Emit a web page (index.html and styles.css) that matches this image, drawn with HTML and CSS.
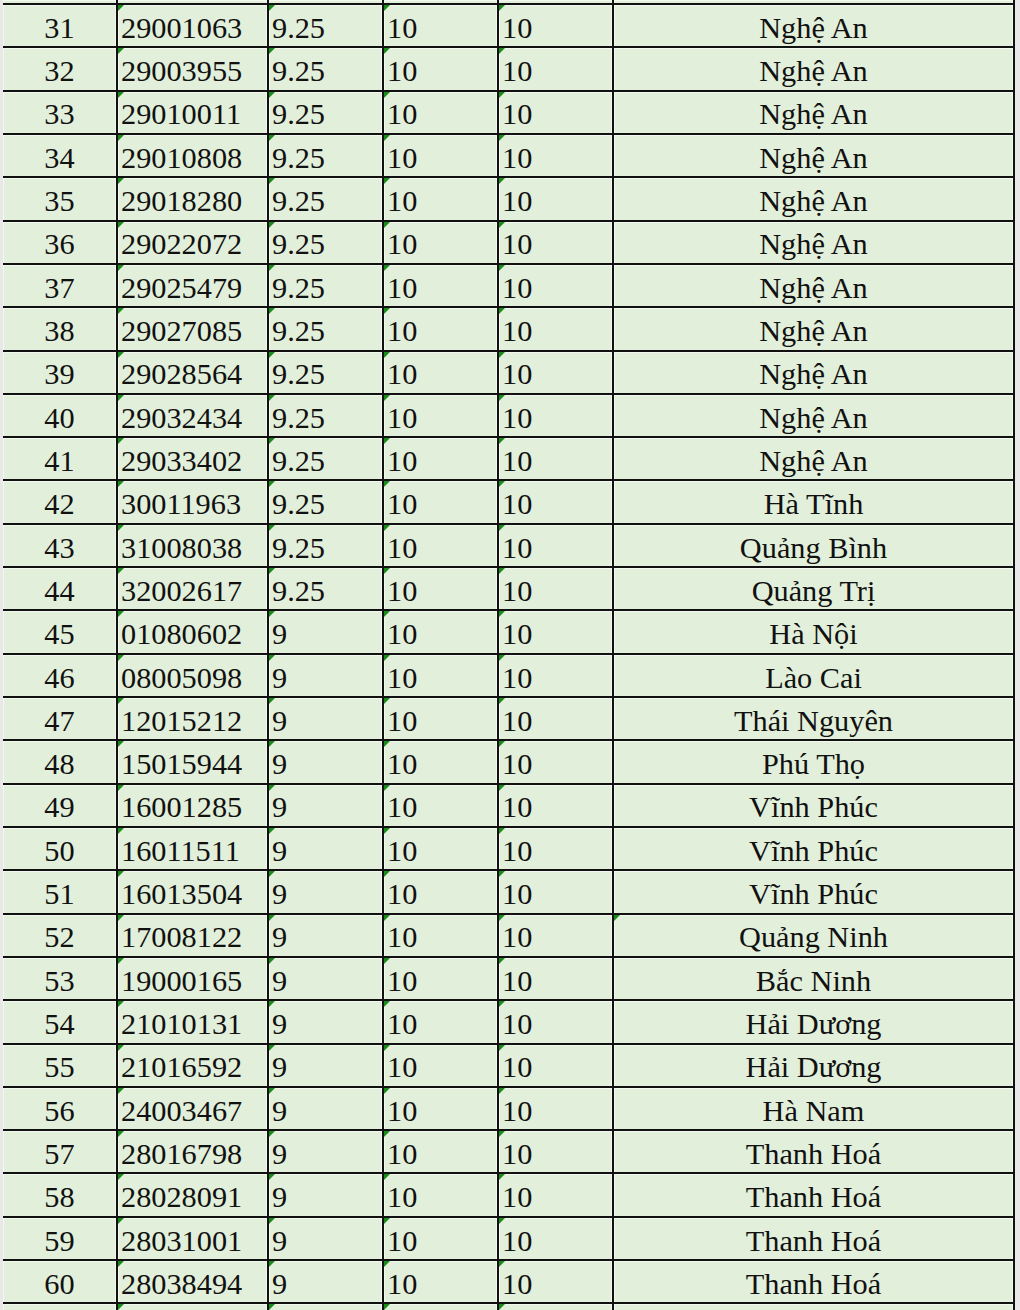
FILE: index.html
```html
<!DOCTYPE html>
<html lang="vi">
<head>
<meta charset="utf-8">
<title>Bảng điểm</title>
<link rel="stylesheet" href="styles.css">
</head>
<body>
<div class="sheet">
  <div class="row top"><div class="c"></div><div class="c"></div><div class="c"></div><div class="c"></div><div class="c"></div><div class="c"></div></div>
  <div class="row"><div class="c n">31</div><div class="c t">29001063</div><div class="c t">9.25</div><div class="c t">10</div><div class="c t">10</div><div class="c p">Nghệ An</div></div>
  <div class="row"><div class="c n">32</div><div class="c t">29003955</div><div class="c t">9.25</div><div class="c t">10</div><div class="c t">10</div><div class="c p">Nghệ An</div></div>
  <div class="row"><div class="c n">33</div><div class="c t">29010011</div><div class="c t">9.25</div><div class="c t">10</div><div class="c t">10</div><div class="c p">Nghệ An</div></div>
  <div class="row"><div class="c n">34</div><div class="c t">29010808</div><div class="c t">9.25</div><div class="c t">10</div><div class="c t">10</div><div class="c p">Nghệ An</div></div>
  <div class="row"><div class="c n">35</div><div class="c t">29018280</div><div class="c t">9.25</div><div class="c t">10</div><div class="c t">10</div><div class="c p">Nghệ An</div></div>
  <div class="row"><div class="c n">36</div><div class="c t">29022072</div><div class="c t">9.25</div><div class="c t">10</div><div class="c t">10</div><div class="c p">Nghệ An</div></div>
  <div class="row"><div class="c n">37</div><div class="c t">29025479</div><div class="c t">9.25</div><div class="c t">10</div><div class="c t">10</div><div class="c p">Nghệ An</div></div>
  <div class="row"><div class="c n">38</div><div class="c t">29027085</div><div class="c t">9.25</div><div class="c t">10</div><div class="c t">10</div><div class="c p">Nghệ An</div></div>
  <div class="row"><div class="c n">39</div><div class="c t">29028564</div><div class="c t">9.25</div><div class="c t">10</div><div class="c t">10</div><div class="c p">Nghệ An</div></div>
  <div class="row"><div class="c n">40</div><div class="c t">29032434</div><div class="c t">9.25</div><div class="c t">10</div><div class="c t">10</div><div class="c p">Nghệ An</div></div>
  <div class="row"><div class="c n">41</div><div class="c t">29033402</div><div class="c t">9.25</div><div class="c t">10</div><div class="c t">10</div><div class="c p">Nghệ An</div></div>
  <div class="row"><div class="c n">42</div><div class="c t">30011963</div><div class="c t">9.25</div><div class="c t">10</div><div class="c t">10</div><div class="c p">Hà Tĩnh</div></div>
  <div class="row"><div class="c n">43</div><div class="c t">31008038</div><div class="c t">9.25</div><div class="c t">10</div><div class="c t">10</div><div class="c p">Quảng Bình</div></div>
  <div class="row"><div class="c n">44</div><div class="c t">32002617</div><div class="c t">9.25</div><div class="c t">10</div><div class="c t">10</div><div class="c p">Quảng Trị</div></div>
  <div class="row"><div class="c n">45</div><div class="c t">01080602</div><div class="c t">9</div><div class="c t">10</div><div class="c t">10</div><div class="c p">Hà Nội</div></div>
  <div class="row"><div class="c n">46</div><div class="c t">08005098</div><div class="c t">9</div><div class="c t">10</div><div class="c t">10</div><div class="c p">Lào Cai</div></div>
  <div class="row"><div class="c n">47</div><div class="c t">12015212</div><div class="c t">9</div><div class="c t">10</div><div class="c t">10</div><div class="c p">Thái Nguyên</div></div>
  <div class="row"><div class="c n">48</div><div class="c t">15015944</div><div class="c t">9</div><div class="c t">10</div><div class="c t">10</div><div class="c p">Phú Thọ</div></div>
  <div class="row"><div class="c n">49</div><div class="c t">16001285</div><div class="c t">9</div><div class="c t">10</div><div class="c t">10</div><div class="c p">Vĩnh Phúc</div></div>
  <div class="row"><div class="c n">50</div><div class="c t">16011511</div><div class="c t">9</div><div class="c t">10</div><div class="c t">10</div><div class="c p">Vĩnh Phúc</div></div>
  <div class="row"><div class="c n">51</div><div class="c t">16013504</div><div class="c t">9</div><div class="c t">10</div><div class="c t">10</div><div class="c p">Vĩnh Phúc</div></div>
  <div class="row"><div class="c n">52</div><div class="c t">17008122</div><div class="c t">9</div><div class="c t">10</div><div class="c t">10</div><div class="c p t">Quảng Ninh</div></div>
  <div class="row"><div class="c n">53</div><div class="c t">19000165</div><div class="c t">9</div><div class="c t">10</div><div class="c t">10</div><div class="c p">Bắc Ninh</div></div>
  <div class="row"><div class="c n">54</div><div class="c t">21010131</div><div class="c t">9</div><div class="c t">10</div><div class="c t">10</div><div class="c p">Hải Dương</div></div>
  <div class="row"><div class="c n">55</div><div class="c t">21016592</div><div class="c t">9</div><div class="c t">10</div><div class="c t">10</div><div class="c p">Hải Dương</div></div>
  <div class="row"><div class="c n">56</div><div class="c t">24003467</div><div class="c t">9</div><div class="c t">10</div><div class="c t">10</div><div class="c p">Hà Nam</div></div>
  <div class="row"><div class="c n">57</div><div class="c t">28016798</div><div class="c t">9</div><div class="c t">10</div><div class="c t">10</div><div class="c p">Thanh Hoá</div></div>
  <div class="row"><div class="c n">58</div><div class="c t">28028091</div><div class="c t">9</div><div class="c t">10</div><div class="c t">10</div><div class="c p">Thanh Hoá</div></div>
  <div class="row"><div class="c n">59</div><div class="c t">28031001</div><div class="c t">9</div><div class="c t">10</div><div class="c t">10</div><div class="c p">Thanh Hoá</div></div>
  <div class="row"><div class="c n">60</div><div class="c t">28038494</div><div class="c t">9</div><div class="c t">10</div><div class="c t">10</div><div class="c p">Thanh Hoá</div></div>
  <div class="row bottom"><div class="c"></div><div class="c t"></div><div class="c t"></div><div class="c t"></div><div class="c t"></div><div class="c"></div></div>
</div>
</body>
</html>
```

FILE: styles.css
```css
html, body {
  margin: 0;
  padding: 0;
}
body {
  background: #e8e8e8;
  font-family: "Liberation Serif", "Times New Roman", serif;
  color: #111;
  overflow: hidden;
}
.sheet {
  margin-left: 3px;
  width: 1012px;
  display: flex;
  flex-direction: column;
}
.row {
  display: grid;
  grid-template-columns: 113px 151px 115px 115px 115px 403px;
  height: 43.32px;
  box-sizing: border-box;
  border-top: 2px solid #111;
}
.row.top {
  height: 3px;
  border-top: none;
}
.row.bottom {
  height: 10px;
}
.c {
  position: relative;
  box-sizing: border-box;
  background: #e2efda;
  border-left: 2px solid #111;
  box-shadow: inset 1px 0 0 #f3f8ef, inset -1px 0 0 #f3f8ef, inset 0 1px 0 #f3f8ef;
  font-size: 30.3px;
  display: flex;
  align-items: flex-end;
  padding: 0 2px 0.5px 3px;
  white-space: nowrap;
  overflow: hidden;
}
.c:first-child {
  border-left: none;
}
.c:last-child {
  border-right: 2px solid #111;
}
.n, .p {
  justify-content: center;
  padding-left: 2px;
}
.t::before {
  content: "";
  position: absolute;
  left: 0;
  top: 0;
  width: 0;
  height: 0;
  border-top: 6px solid #1a8a1a;
  border-right: 6px solid transparent;
}
```
